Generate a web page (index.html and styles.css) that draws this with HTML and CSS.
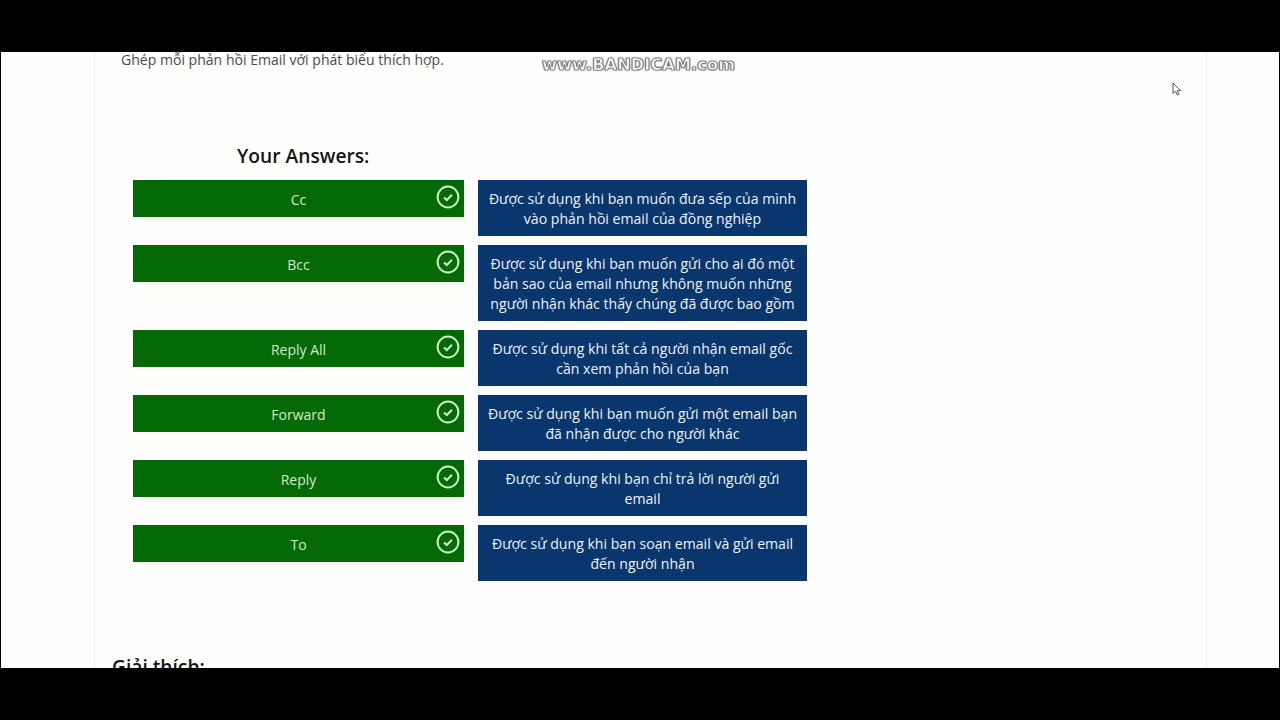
FILE: index.html
```html
<!DOCTYPE html>
<html lang="vi">
<head>
<meta charset="utf-8">
<title>Your Answers</title>
<link rel="stylesheet" href="styles.css">
</head>
<body>
<div class="screen">
  <div class="letterbox"></div>
  <main class="page">
    <section class="card">
      <p class="prompt">Ghép mỗi phản hồi Email với phát biểu thích hợp.</p>
      <h2 class="answers-title">Your Answers:</h2>
      <div class="answers">
        <div class="term"><span>Cc</span><svg class="check" viewBox="0 0 24 24"><circle cx="12" cy="12" r="10.4"/><path d="M8 12.4l2.8 2.6 5.2-5.2"/></svg></div>
        <div class="desc">Được sử dụng khi bạn muốn đưa sếp của mình vào phản hồi email của đồng nghiệp</div>
        <div class="term"><span>Bcc</span><svg class="check" viewBox="0 0 24 24"><circle cx="12" cy="12" r="10.4"/><path d="M8 12.4l2.8 2.6 5.2-5.2"/></svg></div>
        <div class="desc">Được sử dụng khi bạn muốn gửi cho ai đó một bản sao của email nhưng không muốn những người nhận khác thấy chúng đã được bao gồm</div>
        <div class="term"><span>Reply All</span><svg class="check" viewBox="0 0 24 24"><circle cx="12" cy="12" r="10.4"/><path d="M8 12.4l2.8 2.6 5.2-5.2"/></svg></div>
        <div class="desc">Được sử dụng khi tất cả người nhận email gốc cần xem phản hồi của bạn</div>
        <div class="term"><span>Forward</span><svg class="check" viewBox="0 0 24 24"><circle cx="12" cy="12" r="10.4"/><path d="M8 12.4l2.8 2.6 5.2-5.2"/></svg></div>
        <div class="desc">Được sử dụng khi bạn muốn gửi một email bạn đã nhận được cho người khác</div>
        <div class="term"><span>Reply</span><svg class="check" viewBox="0 0 24 24"><circle cx="12" cy="12" r="10.4"/><path d="M8 12.4l2.8 2.6 5.2-5.2"/></svg></div>
        <div class="desc">Được sử dụng khi bạn chỉ trả lời người gửi email</div>
        <div class="term"><span>To</span><svg class="check" viewBox="0 0 24 24"><circle cx="12" cy="12" r="10.4"/><path d="M8 12.4l2.8 2.6 5.2-5.2"/></svg></div>
        <div class="desc">Được sử dụng khi bạn soạn email và gửi email đến người nhận</div>
      </div>
      <h3 class="explain">Giải thích:</h3>
    </section>
    <div class="watermark">www.BANDICAM.com</div>
    <svg class="cursor" viewBox="0 0 10 14"><path d="M1 1v10.5l2.6-2.3 1.7 3.8 1.7-.8-1.7-3.6h3.4z"/></svg>
  </main>
  <div class="letterbox"></div>
</div>
</body>
</html>
```
FILE: styles.css
```css
* { box-sizing: border-box; }
html, body { margin: 0; height: 100%; background: #000; overflow: hidden; }
.screen { width: 1280px; height: 720px; display: flex; flex-direction: column; font-family: "Open Sans", "Noto Sans", sans-serif; }
.letterbox { height: 52px; flex: none; background: #000; }
.page { position: relative; height: 616px; margin: 0 1px; padding-left: 93px; background: #fefefc; overflow: hidden; }
.card { width: 1113px; height: 640px; padding: 0 0 0 38px; border-left: 1px solid #efefec; border-right: 1px solid #efefec; }
.prompt { margin: 0 0 0 -12px; font-size: 14.05px; line-height: 16px; color: #4a4a4a; }
.answers-title { margin: 75px 0 0 104px; font-size: 19.2px; line-height: 26px; font-weight: 600; color: #151515; }
.answers { display: grid; grid-template-columns: 331px 329px; column-gap: 14px; row-gap: 9px; margin-top: 11px; }
.term { position: relative; height: 37px; display: flex; align-items: center; justify-content: center; padding-top: 1px; background: #056a05; color: #cdeecd; font-size: 14px; }
.check { position: absolute; top: 5px; right: 4px; width: 24px; height: 24px; fill: none; stroke: #c9f3c9; stroke-width: 2; }
.desc { display: flex; align-items: center; justify-content: center; min-height: 56px; padding: 9px 9px 7px; background: #08366d; color: #eef2f6; font-size: 14.1px; line-height: 20px; text-align: center; }
.explain { margin: 73px 0 0 -21px; font-size: 19.2px; line-height: 26px; font-weight: 600; color: #151515; }
.watermark { position: absolute; top: 4px; left: 541px; font-family: "DejaVu Sans", sans-serif; font-size: 16px; line-height: 18px; font-weight: 700; letter-spacing: .2px; color: #fff; -webkit-text-stroke: .6px #666; text-shadow: 0 0 2px #555, 0 0 1px #555, 0 0 1px #555; }
.cursor { position: absolute; top: 30px; left: 1171px; width: 10px; height: 14px; fill: #fefefc; stroke: #555; stroke-width: 1; }
```
